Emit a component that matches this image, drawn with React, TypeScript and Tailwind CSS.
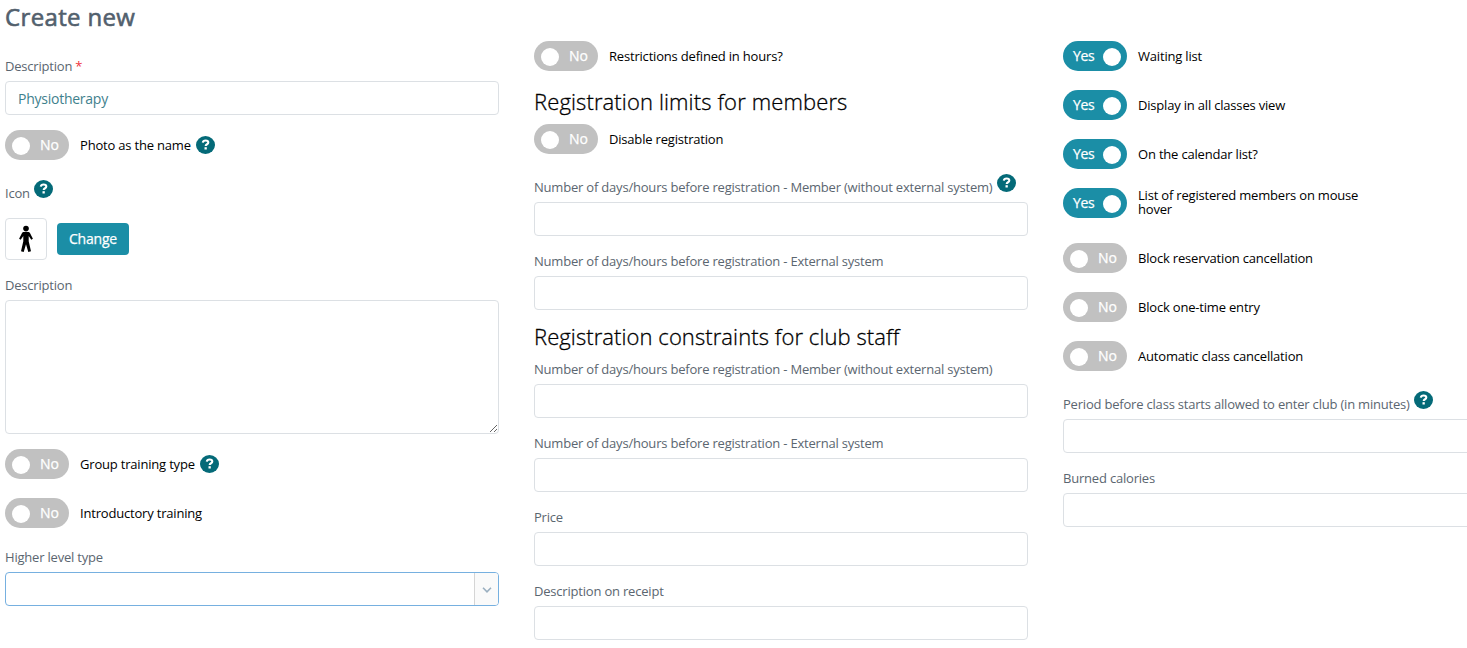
import { useState } from "react"
import clsx from "clsx"

const Help = ({ className = "" }: { className?: string }) => (
    <svg className={clsx("w-[19px] h-[18px] shrink-0", className)} viewBox="0 0 19 18">
        <ellipse cx="9.5" cy="9" rx="9.5" ry="9" fill="#046a78" />
        <path d="M6.8 6.6C7 5.2 8.1 4.5 9.6 4.5c1.6 0 2.7.7 2.7 2 0 1.8-2.6 1.7-2.6 3.5" fill="none" stroke="#fff" strokeWidth="2.1" />
        <rect x="8.5" y="11.2" width="2.3" height="2.3" fill="#fff" />
    </svg>
)

const Toggle = ({ label, on = false, help = false, className = "mb-[19px]", labelClassName = "" }: { label: string; on?: boolean; help?: boolean; className?: string; labelClassName?: string }) => {
    const [checked, setChecked] = useState(on)

    return (
        <div className={clsx("flex items-center h-[30px]", className)}>
            <button
                type="button"
                onClick={() => setChecked(!checked)}
                className={clsx("flex items-center w-16 h-[30px] rounded-full shrink-0 text-white text-sm [-webkit-text-stroke:0.25px_white]", checked ? "bg-[#1b8ea6] pl-[10px] pr-[6px] tracking-[-0.3px]" : "bg-[#c1c1c1] flex-row-reverse pl-[7px] pr-[10px]", "justify-between")}
            >
                <span>{checked ? "Yes" : "No"}</span>
                <span className="w-[18px] h-[18px] mt-[2px] rounded-full bg-white"></span>
            </button>
            <span className={clsx("ml-[11px] max-w-[240px] text-[13px] leading-[14px] tracking-[-0.19px] text-black", labelClassName)}>{label}</span>
            {help && <Help className="ml-[5px] -mt-px" />}
        </div>
    )
}

const Label = ({ text, required = false, help = false }: { text: string; required?: boolean; help?: boolean }) => (
    <label className="flex h-[15px] mb-[7px] text-[13px] leading-[15px] tracking-[-0.2px] text-[#5b6670] whitespace-nowrap">
        {text}
        {required && <span className="ml-[3px] text-[#f0323c]">*</span>}
        {help && <Help className="ml-1 -mt-[6px]" />}
    </label>
)

const Field = ({ label, value = "", required = false, help = false, className = "mb-[18px]" }: { label: string; value?: string; required?: boolean; help?: boolean; className?: string }) => {
    const [text, setText] = useState(value)

    return (
        <div className={className}>
            <Label text={label} required={required} help={help} />
            <input
                type="text"
                value={text}
                onChange={(e) => setText(e.target.value)}
                className="block w-full h-[34px] px-3 border border-[#dce0e4] rounded-[4px] text-sm tracking-[-0.25px] text-[#3f818d] outline-none"
            />
        </div>
    )
}

const App = () => {
    return (
        <div className="w-full h-[648px] overflow-hidden bg-white font-['Open_Sans',sans-serif]">
            <form className="grid grid-cols-[494px_494px_494px] gap-x-[35px] w-[1557px] pl-[5px]">
                <div>
                    <h1 className="h-[34px] mb-[25px] text-2xl leading-[34px] tracking-[0.35px] [-webkit-text-stroke:0.6px_#52606d] text-[#52606d]">Create new</h1>
                    <Field label="Description" value="Physiotherapy" required className="mb-[15px]" />
                    <Toggle label="Photo as the name" help className="mb-[26px]" />
                    <Label text="Icon" help />
                    <div className="flex items-center mt-[17px] mb-[18px]">
                        <div className="flex items-center justify-center w-[42px] h-[42px] border border-[#dce0e4] rounded-[4px]">
                            <svg width="16" height="28" viewBox="0 0 16 28">
                                <circle cx="8" cy="3.6" r="2.8" />
                                <path d="M6 6.9h4c1 0 1.7.5 2.1 1.4l2.8 5.4-1.6 1-2.6-3.8v5.4l2.3 10-2.7.6L8 19.2 5.7 26.9l-2.7-.6 2.3-10v-5.4l-2.6 3.8-1.6-1 2.8-5.4C4.3 7.4 5 6.9 6 6.9z" />
                            </svg>
                        </div>
                        <button type="button" className="w-[72px] h-8 ml-[10px] rounded-[4px] bg-[#1b8ea6] text-sm tracking-[-0.2px] [-webkit-text-stroke:0.25px_white] text-white">Change</button>
                    </div>
                    <Label text="Description" />
                    <textarea className="block w-full h-[134px] mb-[15px] border border-[#dce0e4] rounded-[4px] outline-none" />
                    <Toggle label="Group training type" help />
                    <Toggle label="Introductory training" className="mb-[22px]" />
                    <Label text="Higher level type" />
                    <div className="flex justify-end h-[34px] border border-[#76b0e0] rounded-[4px] overflow-hidden">
                        <div className="flex items-center justify-center w-6 pt-px border-l border-[#d5d5d5] bg-[#fafafa]">
                            <svg width="10" height="6" viewBox="0 0 10 6" fill="none" stroke="#9aafc0" strokeWidth="1.6">
                                <path d="M1 .8l4 4 4-4" />
                            </svg>
                        </div>
                    </div>
                </div>

                <div className="pt-[41px]">
                    <Toggle label="Restrictions defined in hours?" className="mb-[15px]" />
                    <h2 className="h-[30px] mb-2 text-[22px] leading-[30px] font-light tracking-[0.12px] [-webkit-text-stroke:0.3px_black] text-black">Registration limits for members</h2>
                    <Toggle label="Disable registration" className="mb-[26px]" />
                    <Field label="Number of days/hours before registration - Member (without external system)" help />
                    <Field label="Number of days/hours before registration - External system" className="mb-[11px]" />
                    <h2 className="h-[30px] mb-[11px] text-[22px] leading-[30px] font-light tracking-[0.08px] [-webkit-text-stroke:0.3px_black] text-black">Registration constraints for club staff</h2>
                    <Field label="Number of days/hours before registration - Member (without external system)" />
                    <Field label="Number of days/hours before registration - External system" />
                    <Field label="Price" />
                    <Field label="Description on receipt" />
                </div>

                <div className="pt-[41px]">
                    <Toggle label="Waiting list" on />
                    <Toggle label="Display in all classes view" on />
                    <Toggle label="On the calendar list?" on />
                    <Toggle label="List of registered members on mouse hover" on className="mb-[25px]" labelClassName="pb-[2px]" />
                    <Toggle label="Block reservation cancellation" />
                    <Toggle label="Block one-time entry" />
                    <Toggle label="Automatic class cancellation" className="mb-[26px]" />
                    <Field label="Period before class starts allowed to enter club (in minutes)" help />
                    <Field label="Burned calories" />
                </div>
            </form>
        </div>
    )
}

export default App
